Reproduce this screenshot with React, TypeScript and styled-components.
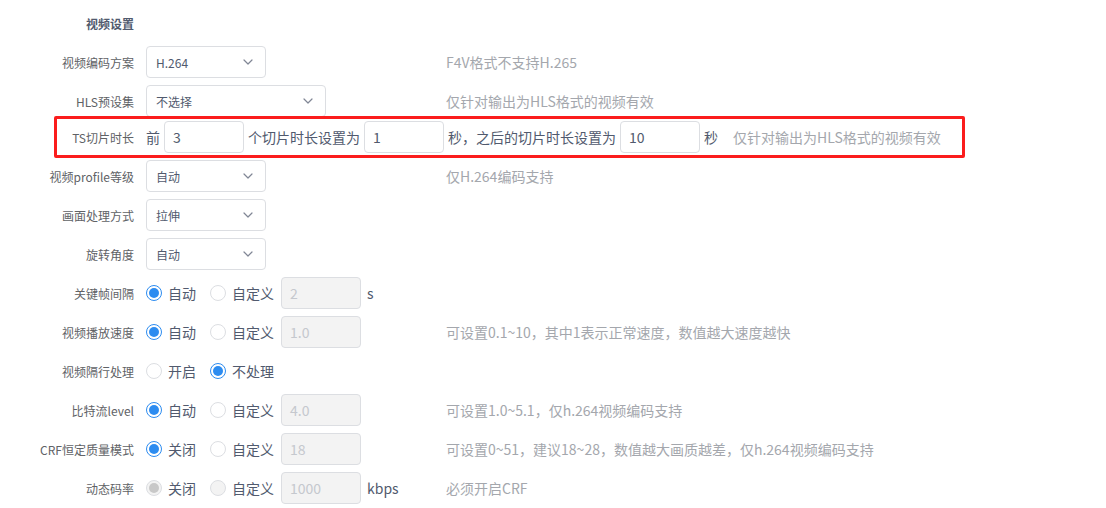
import React from 'react';
import styled, { createGlobalStyle, css } from 'styled-components';

const GlobalStyle = createGlobalStyle`
  html, body {
    margin: 0;
    padding: 0;
    background: #fff;
  }
  body {
    font-family: "Noto Sans CJK SC", "Noto Sans", sans-serif;
    color: #515a6e;
  }
`;

const Page = styled.div`
  padding: 14px 0 0 0;
`;

const Form = styled.div`
  display: flex;
  flex-direction: column;
  gap: 7px;
`;

const TitleRow = styled.div`
  width: 134px;
  text-align: right;
  font-size: 12px;
  font-weight: bold;
  line-height: 20px;
  color: #515a6e;
  margin-bottom: 12px;
`;

const Row = styled.div`
  display: grid;
  grid-template-columns: 134px 288px auto;
  column-gap: 12px;
  align-items: center;
  height: 32px;
`;

const Label = styled.div`
  text-align: right;
  font-size: 12px;
  color: #606266;
  white-space: nowrap;
`;

const Controls = styled.div`
  display: flex;
  align-items: center;
  font-size: 14px;
  color: #515a6e;
  white-space: nowrap;
`;

const Hint = styled.div`
  font-size: 14px;
  color: #a4a7ad;
  white-space: nowrap;
`;

const MarkedRow = styled.div`
  display: inline-flex;
  align-self: flex-start;
  align-items: center;
  margin: -8px 0 -5px 54px;
  padding: 1px 21px 1px 0;
  height: 34px;
  border: 3px solid #fb1d1d;
  border-radius: 2px;
  font-size: 14px;
  color: #515a6e;
  white-space: nowrap;
`;

const MarkedLabel = styled(Label)`
  width: 77px;
  margin-right: 12px;
`;

const Word = styled.span`
  margin: 0 4px;
  &:first-of-type {
    margin-left: 0;
  }
`;

const MarkedHint = styled(Hint)`
  margin-left: 11px;
`;

const SelectBox = styled.div<{ w: number }>`
  box-sizing: border-box;
  width: ${(p) => p.w}px;
  height: 32px;
  border: 1px solid #dcdee2;
  border-radius: 4px;
  display: flex;
  align-items: center;
  justify-content: space-between;
  padding: 0 12px 0 9px;
  font-size: 12px;
  color: #515a6e;
  background: #fff;
`;

const TextInput = styled.div<{ disabled?: boolean }>`
  box-sizing: border-box;
  width: 80px;
  height: 32px;
  border: 1px solid #dcdee2;
  border-radius: 4px;
  display: flex;
  align-items: center;
  padding: 0 8px;
  font-size: 14px;
  color: #515a6e;
  background: #fff;
  ${(p) =>
    p.disabled &&
    css`
      background: #f3f3f3;
      color: #c5c8ce;
    `}
`;

const RadioGroup = styled.div`
  display: flex;
  align-items: center;
`;

const RadioItem = styled.label`
  display: flex;
  align-items: center;
  margin-right: 14px;
  font-size: 14px;
  color: #515a6e;
  &:last-child {
    margin-right: 7px;
  }
`;

const RadioCircle = styled.span<{ checked?: boolean; disabled?: boolean }>`
  box-sizing: border-box;
  width: 16px;
  height: 16px;
  border-radius: 50%;
  border: 1px solid ${(p) => (p.checked ? '#2d8cf0' : '#dcdee2')};
  background: #fff;
  margin-right: 6px;
  position: relative;
  flex-shrink: 0;
  &::after {
    content: '';
    position: absolute;
    left: 2px;
    top: 2px;
    width: 10px;
    height: 10px;
    border-radius: 50%;
    background: #2d8cf0;
    display: ${(p) => (p.checked ? 'block' : 'none')};
  }
  ${(p) =>
    p.disabled &&
    css`
      border-color: #dcdee2;
      background: #f3f3f3;
      &::after {
        background: #c8c8c8;
      }
    `}
`;

const Unit = styled.span`
  margin-left: 6px;
  font-size: 14px;
  color: #515a6e;
`;

const Chevron = () => (
  <svg width="10" height="6" viewBox="0 0 10 6" fill="none">
    <path d="M1 1l4 4 4-4" stroke="#808695" strokeWidth="1.2" strokeLinecap="round" strokeLinejoin="round" />
  </svg>
);

const Select = ({ value, w = 120 }: { value: string; w?: number }) => (
  <SelectBox w={w}>
    <span>{value}</span>
    <Chevron />
  </SelectBox>
);

interface RadioProps {
  options: string[];
  checked: number;
  disabled?: boolean;
}

const Radios = ({ options, checked, disabled }: RadioProps) => (
  <RadioGroup>
    {options.map((o, i) => (
      <RadioItem key={o}>
        <RadioCircle checked={i === checked} disabled={disabled} />
        {o}
      </RadioItem>
    ))}
  </RadioGroup>
);

const App: React.FC = () => {
  return (
    <Page>
      <GlobalStyle />
      <TitleRow>视频设置</TitleRow>
      <Form>
        <Row>
          <Label>视频编码方案</Label>
          <Controls>
            <Select value="H.264" />
          </Controls>
          <Hint>F4V格式不支持H.265</Hint>
        </Row>
        <Row>
          <Label>HLS预设集</Label>
          <Controls>
            <Select value="不选择" w={180} />
          </Controls>
          <Hint>仅针对输出为HLS格式的视频有效</Hint>
        </Row>
        <MarkedRow>
          <MarkedLabel>TS切片时长</MarkedLabel>
          <Word>前</Word>
          <TextInput>3</TextInput>
          <Word>个切片时长设置为</Word>
          <TextInput>1</TextInput>
          <Word>秒，之后的切片时长设置为</Word>
          <TextInput>10</TextInput>
          <Word>秒</Word>
          <MarkedHint>仅针对输出为HLS格式的视频有效</MarkedHint>
        </MarkedRow>
        <Row>
          <Label>视频profile等级</Label>
          <Controls>
            <Select value="自动" />
          </Controls>
          <Hint>仅H.264编码支持</Hint>
        </Row>
        <Row>
          <Label>画面处理方式</Label>
          <Controls>
            <Select value="拉伸" />
          </Controls>
        </Row>
        <Row>
          <Label>旋转角度</Label>
          <Controls>
            <Select value="自动" />
          </Controls>
        </Row>
        <Row>
          <Label>关键帧间隔</Label>
          <Controls>
            <Radios options={['自动', '自定义']} checked={0} />
            <TextInput disabled>2</TextInput>
            <Unit>s</Unit>
          </Controls>
        </Row>
        <Row>
          <Label>视频播放速度</Label>
          <Controls>
            <Radios options={['自动', '自定义']} checked={0} />
            <TextInput disabled>1.0</TextInput>
          </Controls>
          <Hint>可设置0.1~10，其中1表示正常速度，数值越大速度越快</Hint>
        </Row>
        <Row>
          <Label>视频隔行处理</Label>
          <Controls>
            <Radios options={['开启', '不处理']} checked={1} />
          </Controls>
        </Row>
        <Row>
          <Label>比特流level</Label>
          <Controls>
            <Radios options={['自动', '自定义']} checked={0} />
            <TextInput disabled>4.0</TextInput>
          </Controls>
          <Hint>可设置1.0~5.1，仅h.264视频编码支持</Hint>
        </Row>
        <Row>
          <Label>CRF恒定质量模式</Label>
          <Controls>
            <Radios options={['关闭', '自定义']} checked={0} />
            <TextInput disabled>18</TextInput>
          </Controls>
          <Hint>可设置0~51，建议18~28，数值越大画质越差，仅h.264视频编码支持</Hint>
        </Row>
        <Row>
          <Label>动态码率</Label>
          <Controls>
            <Radios options={['关闭', '自定义']} checked={0} disabled />
            <TextInput disabled>1000</TextInput>
            <Unit>kbps</Unit>
          </Controls>
          <Hint>必须开启CRF</Hint>
        </Row>
      </Form>
    </Page>
  );
};

export default App;
